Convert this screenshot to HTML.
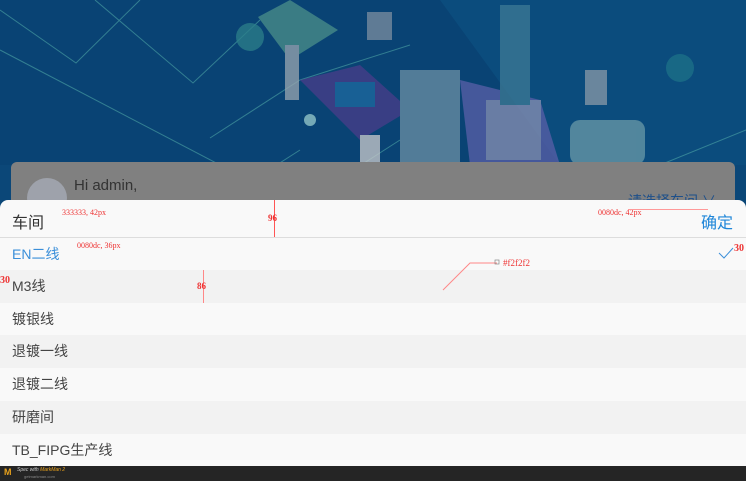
<!DOCTYPE html>
<html><head><meta charset="utf-8"><style>
*{margin:0;padding:0;box-sizing:border-box}
body{width:746px;height:481px;overflow:hidden;position:relative;background:#0b4778;font-family:"Liberation Sans","Noto Sans CJK SC",sans-serif}
.abs{position:absolute}
.row{position:absolute;left:0;width:746px;height:33px;font-size:14px;color:#444;padding-left:12px;line-height:32px}
.g{background:#f2f2f2}.w{background:#f9f9f9}
.ann{position:absolute;font-family:"Liberation Serif",serif;font-size:8px;color:#e33}
</style></head><body>
<svg class="abs" style="left:0;top:0" width="746" height="165">
<rect width="746" height="165" fill="#094374"/>
<polygon points="440,0 746,0 746,165 560,165" fill="#0d5484" opacity=".6"/>
<g stroke="#4fa7a6" stroke-width="1" fill="none" opacity=".6">
<polyline points="0,10 76,63 140,0"/><polyline points="95,0 193,83 260,20"/>
<line x1="0" y1="50" x2="220" y2="165"/><polyline points="210,138 300,80 410,45"/>
<polyline points="225,198 300,150"/><polyline points="330,185 400,140"/>
<line x1="660" y1="165" x2="746" y2="130"/>
</g>
<g opacity=".75">
<polygon points="258,17 290,0 338,30 290,60" fill="#4b8f8a"/>
<circle cx="250" cy="37" r="14" fill="#2c7f8a"/>
<circle cx="680" cy="68" r="14" fill="#1d7288"/>
<rect x="367" y="12" width="25" height="28" fill="#7c8ea0"/>
<polygon points="300,80 360,65 410,110 360,140" fill="#4a3d8a"/>
<rect x="335" y="82" width="40" height="25" fill="#1e6aa0"/>
<rect x="400" y="70" width="60" height="95" fill="#6b8fa5"/>
<polygon points="460,80 540,100 560,165 470,165" fill="#5a5fa8"/>
<rect x="486" y="100" width="55" height="60" fill="#8a91b4"/>
<rect x="500" y="5" width="30" height="100" fill="#3d7a95"/>
<rect x="585" y="70" width="22" height="35" fill="#8a9aa8"/>
<rect x="570" y="120" width="75" height="45" rx="10" fill="#6a9aa8"/>
<rect x="285" y="45" width="14" height="55" fill="#9aa6b0"/>
<circle cx="310" cy="120" r="6" fill="#9cc"/>
<rect x="360" y="135" width="20" height="30" fill="#ccc"/>
</g>
</svg>
<div class="abs" style="left:11px;top:162px;width:724px;height:60px;background:#808080;border-radius:6px"></div>
<div class="abs" style="left:27px;top:178px;width:40px;height:40px;border-radius:50%;background:#9ea2ab"></div>
<div class="abs" style="left:74px;top:177px;font-size:15px;color:#333">Hi admin,</div>
<div class="abs" style="left:628px;top:191px;font-size:14px;color:#1d4f8a">请选择车间 ∨</div>
<div class="abs" style="left:0;top:200px;width:746px;height:266px;background:#f9f9f9;border-radius:8px 8px 0 0"></div>
<div class="abs" style="left:0;top:237px;width:746px;height:1px;background:#ddd"></div>
<div class="abs" style="left:12px;top:209px;font-size:16px;color:#333">车间</div>
<div class="abs" style="left:701px;top:209px;font-size:16px;color:#1f86d9">确定</div>
<div class="row w" style="top:238px;color:#3b8fd9">EN二线</div>
<div class="row g" style="top:270px">M3线</div>
<div class="row w" style="top:303px">镀银线</div>
<div class="row g" style="top:335px">退镀一线</div>
<div class="row w" style="top:368px">退镀二线</div>
<div class="row g" style="top:401px">研磨间</div>
<div class="row w" style="top:434px">TB_FIPG生产线</div>
<svg class="abs" style="left:718px;top:247px" width="16" height="12"><polyline points="1,6 6,11 15,1" fill="none" stroke="#3b8fd9" stroke-width="1"/></svg>
<div class="abs" style="left:274px;top:200px;width:1px;height:37px;background:#f55"></div>
<div class="ann" style="left:268px;top:213px;font-size:9px;font-weight:bold">96</div>
<div class="abs" style="left:203px;top:270px;width:1px;height:33px;background:#f88"></div>
<div class="ann" style="left:197px;top:281px;font-size:9px;font-weight:bold">86</div>
<div class="ann" style="left:62px;top:208px">333333, 42px</div>
<div class="ann" style="left:598px;top:208px">0080dc, 42px</div>
<div class="abs" style="left:628px;top:209px;width:80px;height:1px;background:#f99"></div>
<div class="ann" style="left:77px;top:241px">0080dc, 36px</div>
<div class="ann" style="left:503px;top:258px;font-size:9px">#f2f2f2</div>
<div class="ann" style="left:734px;top:243px;font-size:10px;font-weight:bold">30</div>
<div class="ann" style="left:0;top:275px;font-size:10px;font-weight:bold">30</div>
<svg class="abs" style="left:440px;top:258px" width="65" height="35"><polyline points="3,32 30,5 57,5" fill="none" stroke="#f88" stroke-width="1"/><rect x="55" y="2" width="4" height="4" fill="none" stroke="#888" stroke-width=".7"/></svg>
<div class="abs" style="left:0;top:466px;width:746px;height:15px;background:#252525"></div>
<div class="abs" style="left:4px;top:467px;font-size:9px;font-weight:bold;color:#e9a21c">M</div>
<div class="abs" style="left:17px;top:467px;font-size:5px;color:#ccc;font-style:italic">Spec with <span style="color:#e9a21c">MarkMan 2</span></div>
<div class="abs" style="left:24px;top:474px;font-size:4px;color:#888">getmarkman.com</div>
</body></html>
